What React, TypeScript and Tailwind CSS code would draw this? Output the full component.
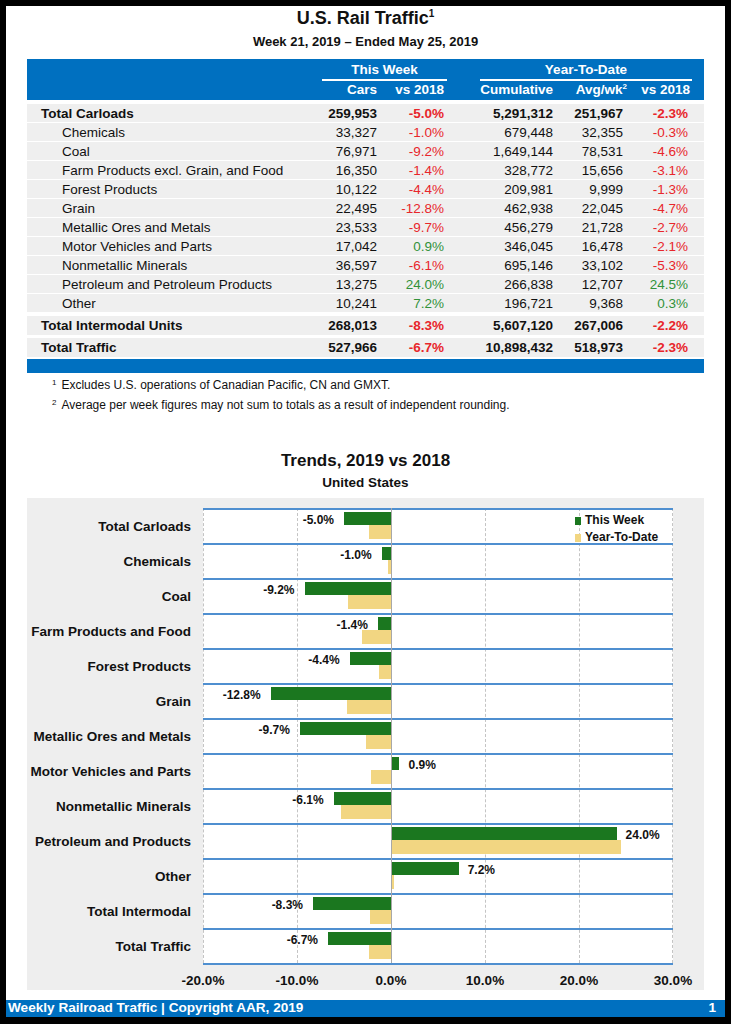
import React from 'react';

type Row = {
  name: string;
  cars: string;
  wk: string;
  cum: string;
  avg: string;
  ytd: string;
  bold?: boolean;
};

const carloads: Row[] = [
  { name: 'Total Carloads', cars: '259,953', wk: '-5.0%', cum: '5,291,312', avg: '251,967', ytd: '-2.3%', bold: true },
  { name: 'Chemicals', cars: '33,327', wk: '-1.0%', cum: '679,448', avg: '32,355', ytd: '-0.3%' },
  { name: 'Coal', cars: '76,971', wk: '-9.2%', cum: '1,649,144', avg: '78,531', ytd: '-4.6%' },
  { name: 'Farm Products excl. Grain, and Food', cars: '16,350', wk: '-1.4%', cum: '328,772', avg: '15,656', ytd: '-3.1%' },
  { name: 'Forest Products', cars: '10,122', wk: '-4.4%', cum: '209,981', avg: '9,999', ytd: '-1.3%' },
  { name: 'Grain', cars: '22,495', wk: '-12.8%', cum: '462,938', avg: '22,045', ytd: '-4.7%' },
  { name: 'Metallic Ores and Metals', cars: '23,533', wk: '-9.7%', cum: '456,279', avg: '21,728', ytd: '-2.7%' },
  { name: 'Motor Vehicles and Parts', cars: '17,042', wk: '0.9%', cum: '346,045', avg: '16,478', ytd: '-2.1%' },
  { name: 'Nonmetallic Minerals', cars: '36,597', wk: '-6.1%', cum: '695,146', avg: '33,102', ytd: '-5.3%' },
  { name: 'Petroleum and Petroleum Products', cars: '13,275', wk: '24.0%', cum: '266,838', avg: '12,707', ytd: '24.5%' },
  { name: 'Other', cars: '10,241', wk: '7.2%', cum: '196,721', avg: '9,368', ytd: '0.3%' },
];

const totals: Row[] = [
  { name: 'Total Intermodal Units', cars: '268,013', wk: '-8.3%', cum: '5,607,120', avg: '267,006', ytd: '-2.2%', bold: true },
  { name: 'Total Traffic', cars: '527,966', wk: '-6.7%', cum: '10,898,432', avg: '518,973', ytd: '-2.3%', bold: true },
];

const trends = [
  { name: 'Total Carloads', wk: -5.0, ytd: -2.3 },
  { name: 'Chemicals', wk: -1.0, ytd: -0.3 },
  { name: 'Coal', wk: -9.2, ytd: -4.6 },
  { name: 'Farm Products and Food', wk: -1.4, ytd: -3.1 },
  { name: 'Forest Products', wk: -4.4, ytd: -1.3 },
  { name: 'Grain', wk: -12.8, ytd: -4.7 },
  { name: 'Metallic Ores and Metals', wk: -9.7, ytd: -2.7 },
  { name: 'Motor Vehicles and Parts', wk: 0.9, ytd: -2.1 },
  { name: 'Nonmetallic Minerals', wk: -6.1, ytd: -5.3 },
  { name: 'Petroleum and Products', wk: 24.0, ytd: 24.5 },
  { name: 'Other', wk: 7.2, ytd: 0.3 },
  { name: 'Total Intermodal', wk: -8.3, ytd: -2.2 },
  { name: 'Total Traffic', wk: -6.7, ytd: -2.3 },
];

// plot scale: 470px covers -20% .. 30%
const PX = 9.4;
const ZERO = 188;
const ticks = [-20, -10, 0, 10, 20, 30];

const pctColor = (v: string) => (v.startsWith('-') ? 'text-[#e8262b]' : 'text-[#32923a]');

function TableRow({ row, className }: { row: Row; className: string }) {
  const weight = row.bold ? 'font-bold' : '';
  return (
    <div className={`grid grid-cols-[295px_55px_67px_109px_74px_64px] bg-[#efefef] items-center text-[13.5px] text-[#111] ${className}`}>
      <div className={`${row.bold ? 'pl-[14px] font-bold' : 'pl-[35px]'}`}>{row.name}</div>
      <div className={`text-right ${weight}`}>{row.cars}</div>
      <div className={`text-right ${weight} ${pctColor(row.wk)}`}>{row.wk}</div>
      <div className={`text-right ${weight}`}>{row.cum}</div>
      <div className={`text-right ${weight} pr-[4px]`}>{row.avg}</div>
      <div className={`text-right ${weight} pr-[3px] ${pctColor(row.ytd)}`}>{row.ytd}</div>
    </div>
  );
}

function TrendsChart() {
  return (
    <div className="mx-[21px] mt-[7px] bg-[#eeeeee] pt-[10px] flex flex-col">
      <div className="flex">
        <div className="w-[176px] flex flex-col">
          {trends.map((t) => (
            <div key={t.name} className="h-[35px] pt-[4px] flex items-center justify-end pr-[12px] text-[13.5px] font-bold text-[#111]">
              {t.name}
            </div>
          ))}
        </div>
        <div className="relative w-[470px] bg-white border-b-2 border-[#4f8fd0]">
          {[0, 94, 282, 376, 469].map((x) => (
            <div key={x} className="absolute top-0 bottom-0 border-l border-dashed border-[#c4c4c4]" style={{ left: x }} />
          ))}
          <div className="flex flex-col">
            {trends.map((t, i) => {
              const wkLeft = ZERO + Math.min(t.wk, 0) * PX;
              const ytdLeft = ZERO + Math.min(t.ytd, 0) * PX;
              return (
                <div key={t.name} className="relative h-[35px] border-t-2 border-[#4f8fd0]">
                  <div className="absolute top-[2px] h-[13px] bg-[#1b771f]" style={{ left: wkLeft, width: Math.abs(t.wk) * PX }} />
                  <div className="absolute top-[15px] h-[14px] bg-[#f2d682]" style={{ left: ytdLeft, width: Math.abs(t.ytd) * PX }} />
                  <div
                    className="absolute top-[3px] text-[12px] leading-[14px] font-bold text-[#111] whitespace-nowrap"
                    style={t.wk < 0 ? { right: 470 - wkLeft + 10 } : { left: ZERO + t.wk * PX + 9 }}
                  >
                    {t.wk.toFixed(1)}%
                  </div>
                  {i === 0 && (
                    <div className="absolute left-[372px] top-[2px] flex flex-col text-[12px] leading-[17px] font-bold text-[#111]">
                      <div className="flex items-center gap-[4px]">
                        <span className="w-[6px] h-[8px] bg-[#1b771f]" />
                        This Week
                      </div>
                      <div className="flex items-center gap-[4px]">
                        <span className="w-[6px] h-[8px] bg-[#f2d682]" />
                        Year-To-Date
                      </div>
                    </div>
                  )}
                </div>
              );
            })}
          </div>
          <div className="absolute top-0 bottom-0 w-px bg-[#a8a8a8]" style={{ left: ZERO }} />
        </div>
      </div>
      <div className="relative ml-[176px] w-[470px] h-[25px]">
        {ticks.map((t) => (
          <div
            key={t}
            className="absolute top-[8px] -translate-x-1/2 text-[13.5px] leading-[16px] font-bold text-[#111]"
            style={{ left: ZERO + t * PX }}
          >
            {t.toFixed(1)}%
          </div>
        ))}
      </div>
    </div>
  );
}

export default function App() {
  return (
    <div className="w-[731px] h-[1024px] bg-black p-[6px] pb-[7px] font-['Liberation_Sans',Arial,sans-serif]">
      <div className="h-full bg-white flex flex-col">
        <div className="mt-[1px] h-[22px] text-center text-[18px] leading-[22px] font-bold text-[#111]">
          U.S. Rail Traffic<span className="relative -top-[7px] text-[10px]">1</span>
        </div>
        <div className="mt-[5px] h-[16px] text-center text-[13px] leading-[16px] font-bold text-[#111]">
          Week 21, 2019 – Ended May 25, 2019
        </div>

        <div className="mx-[21px] mt-[9px] flex flex-col">
          <div className="h-[41px] bg-[#0070c0] text-white font-bold text-[13.5px] pt-[3px]">
            <div className="grid grid-cols-[295px_55px_67px_109px_74px_64px]">
              <div />
              <div className="col-span-2 mr-[-3px] text-center leading-[16px] pb-[1px] border-b-2 border-white">This Week</div>
              <div className="col-span-3 ml-[36px] mr-[-1px] text-center leading-[16px] pb-[1px] border-b-2 border-white">Year-To-Date</div>
            </div>
            <div className="grid grid-cols-[295px_55px_67px_109px_74px_64px] leading-[17px]">
              <div />
              <div className="text-right">Cars</div>
              <div className="text-right">vs 2018</div>
              <div className="text-right">Cumulative</div>
              <div className="text-right">
                Avg/wk<span className="relative -top-[5px] text-[8px]">2</span>
              </div>
              <div className="text-right pr-[1px]">vs 2018</div>
            </div>
          </div>
          <div className="mt-[4px] flex flex-col gap-[1px]">
            {carloads.map((r) => (
              <TableRow key={r.name} row={r} className="h-[18px]" />
            ))}
          </div>
          <TableRow row={totals[0]} className="mt-[4px] h-[19px]" />
          <TableRow row={totals[1]} className="mt-[3px] h-[19px]" />
          <div className="mt-[2px] h-[14px] bg-[#0070c0]" />
        </div>

        <div className="mt-[3px] pl-[46px] text-[12px] leading-[19px] text-[#111]">
          <div>
            <span className="relative -top-[4px] text-[8px] mr-[5px]">1</span>
            Excludes U.S. operations of Canadian Pacific, CN and GMXT.
          </div>
          <div>
            <span className="relative -top-[4px] text-[8px] mr-[5px]">2</span>
            Average per week figures may not sum to totals as a result of independent rounding.
          </div>
        </div>

        <div className="mt-[34px] h-[22px] text-center text-[17px] leading-[22px] font-bold text-[#111]">
          Trends, 2019 vs 2018
        </div>
        <div className="mt-[3px] h-[16px] text-center text-[13.5px] leading-[16px] font-bold text-[#111]">
          United States
        </div>

        <TrendsChart />

        <div className="mt-auto h-[17px] bg-[#0070c0] flex items-center justify-between pl-[2px] pr-[9px] text-white font-bold text-[13.6px]">
          <span>Weekly Railroad Traffic | Copyright AAR, 2019</span>
          <span>1</span>
        </div>
      </div>
    </div>
  );
}
